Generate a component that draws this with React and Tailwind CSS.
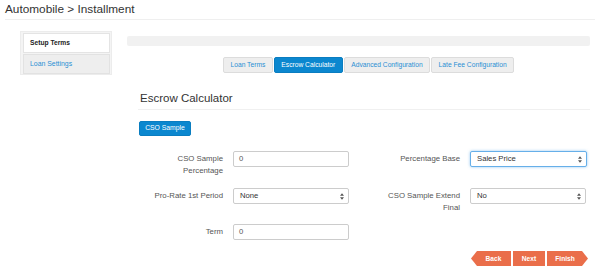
import React from "react";

function Arrows() {
  return (
    <svg width="4" height="7" viewBox="0 0 4 7" className="shrink-0">
      <path d="M0 2.8 L2 0.3 L4 2.8Z" fill="#555" />
      <path d="M0 4.2 L2 6.7 L4 4.2Z" fill="#555" />
    </svg>
  );
}

function TextInput({ value, width }) {
  return (
    <div
      className={`h-[16px] ${width} shrink-0 border border-[#cccccc] rounded-[2px] bg-white flex items-center pl-[5px] text-[7.7px] text-[#555]`}
    >
      {value}
    </div>
  );
}

function Select({ value, width, focus }) {
  return (
    <div
      className={`h-[16px] ${width} shrink-0 border rounded-[2px] bg-white flex items-center justify-between pl-[6px] pr-[4px] text-[7.7px] text-[#333] ${
        focus
          ? "border-[#66afe9] shadow-[0_0_3px_rgba(102,175,233,0.7)]"
          : "border-[#cccccc]"
      }`}
    >
      <span>{value}</span>
      <Arrows />
    </div>
  );
}

function Label({ children }) {
  return (
    <div className="w-[90px] shrink-0 text-right text-[7.8px] leading-[11.5px] text-[#555] pt-[2px]">
      {children}
    </div>
  );
}

export default function App() {
  const tabs = [
    { name: "Loan Terms", active: false },
    { name: "Escrow Calculator", active: true },
    { name: "Advanced Configuration", active: false },
    { name: "Late Fee Configuration", active: false },
  ];
  return (
    <div className="w-[600px] h-[271px] overflow-hidden bg-white font-['Liberation_Sans',Arial,sans-serif]">
      <div className="mx-[5px] h-[20px] border-b border-[#efefef] text-[11.8px] leading-[18px] text-[#333]">
        Automobile &gt; Installment
      </div>
      <div className="flex pl-[20px] pt-[11px]">
        <div className="w-[92px] h-[44px] shrink-0 bg-[#f4f4f4] border border-[#ececec] pt-[1px] pl-[2px] pr-[1px] flex flex-col gap-[1px]">
          <div className="h-[20px] bg-white border border-[#e4e4e4] flex items-center pl-[6px] text-[6.7px] font-bold text-[#222]">
            Setup Terms
          </div>
          <div className="h-[20px] bg-[#eeeeee] border border-[#e2e2e2] flex items-center pl-[6px] text-[6.9px] text-[#2a8fd4]">
            Loan Settings
          </div>
        </div>
        <div className="ml-[15px] w-[463px] shrink-0">
          <div className="mt-[5px] h-[10px] bg-[#f1f1f1] rounded-[2px]" />
          <div className="mt-[11px] ml-[96px] flex gap-[1px]">
            {tabs.map((t) => (
              <div
                key={t.name}
                className={`h-[16px] px-[6.5px] flex items-center rounded-[2px] border text-[6.7px] whitespace-nowrap ${
                  t.active
                    ? "bg-[#0b87cf] border-[#0a7dc0] text-white"
                    : "bg-[#eeeeee] border-[#dcdcdc] text-[#2a8fd4]"
                }`}
              >
                {t.name}
              </div>
            ))}
          </div>
          <div className="mt-[18px] ml-[11px] border-b border-[#f0f0f0] pl-[2px] pb-[4px] text-[11.5px] leading-[14px] text-[#333]">
            Escrow Calculator
          </div>
          <div className="mt-[11px] ml-[12px] h-[15px] w-[52px] rounded-[2px] bg-[#0b87cf] border border-[#0a7dc0] flex items-center justify-center text-[6.8px] text-white">
            CSO Sample
          </div>
          <div className="mt-[15px] ml-[6px]">
            <div className="flex items-start h-[37px]">
              <Label>
                CSO Sample
                <br />
                Percentage
              </Label>
              <div className="w-[10px] shrink-0" />
              <TextInput value="0" width="w-[116px]" />
              <div className="w-[21px] shrink-0" />
              <Label>Percentage Base</Label>
              <div className="w-[10px] shrink-0" />
              <Select value="Sales Price" width="w-[117px]" focus />
            </div>
            <div className="flex items-start h-[36px]">
              <Label>Pro-Rate 1st Period</Label>
              <div className="w-[10px] shrink-0" />
              <Select value="None" width="w-[116px]" />
              <div className="w-[21px] shrink-0" />
              <Label>
                CSO Sample Extend
                <br />
                Final
              </Label>
              <div className="w-[10px] shrink-0" />
              <Select value="No" width="w-[116px]" />
            </div>
            <div className="flex items-start h-[16px]">
              <Label>Term</Label>
              <div className="w-[10px] shrink-0" />
              <TextInput value="0" width="w-[116px]" />
            </div>
          </div>
          <div className="mt-[11px] mr-[2px] flex justify-end gap-[2px] text-[6.6px] font-bold text-white">
            <div className="h-[15px] w-[40px] bg-[#ea6e4a] flex items-center justify-center pl-[5px] [clip-path:polygon(6px_0,100%_0,100%_100%,6px_100%,0_50%)]">
              Back
            </div>
            <div className="h-[15px] w-[32px] bg-[#ea6e4a] flex items-center justify-center">
              Next
            </div>
            <div className="h-[15px] w-[41px] bg-[#ea6e4a] flex items-center justify-center pr-[5px] [clip-path:polygon(0_0,calc(100%-6px)_0,100%_50%,calc(100%-6px)_100%,0_100%)]">
              Finish
            </div>
          </div>
        </div>
      </div>
    </div>
  );
}
